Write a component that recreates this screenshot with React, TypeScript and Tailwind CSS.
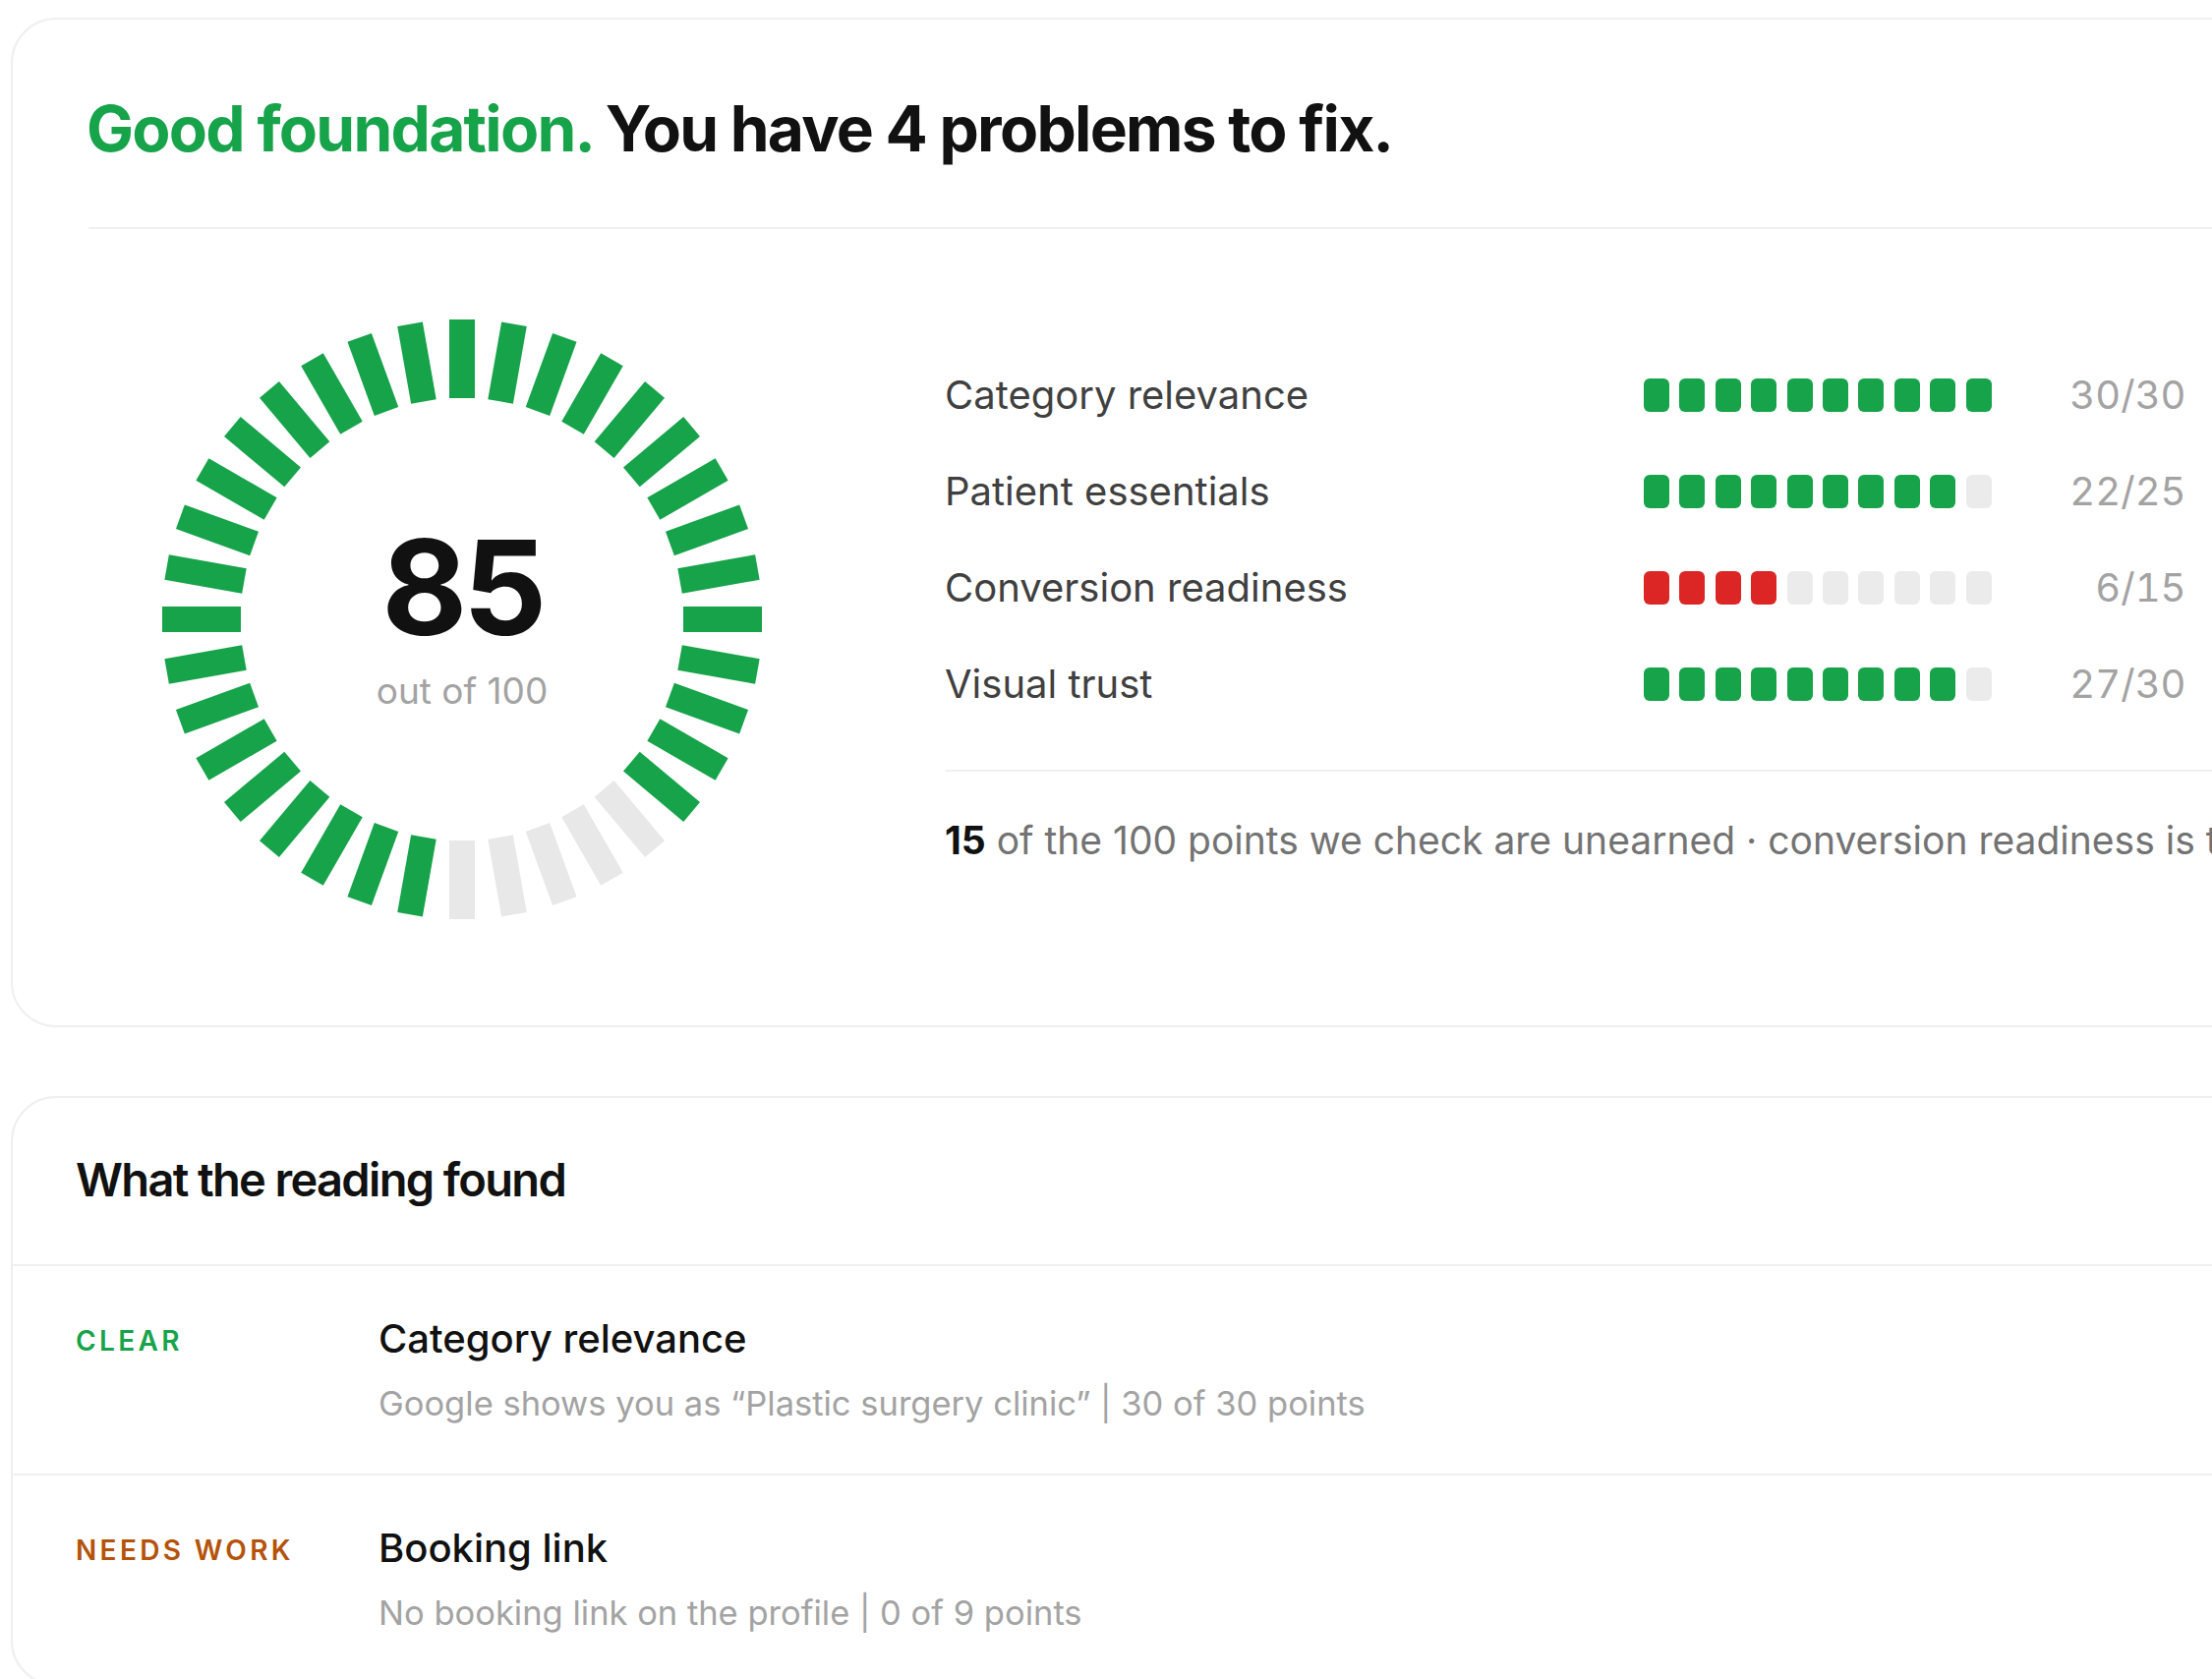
import React from "react";

type Metric = { label: string; filled: number; tone: "green" | "red"; score: string };

const metrics: Metric[] = [
  { label: "Category relevance", filled: 10, tone: "green", score: "30/30" },
  { label: "Patient essentials", filled: 9, tone: "green", score: "22/25" },
  { label: "Conversion readiness", filled: 4, tone: "red", score: "6/15" },
  { label: "Visual trust", filled: 9, tone: "green", score: "27/30" },
];

const findings = [
  {
    status: "CLEAR",
    statusClass: "text-[#16a34a]",
    title: "Category relevance",
    detail: "Google shows you as \u201cPlastic surgery clinic\u201d | 30 of 30 points",
  },
  {
    status: "NEEDS WORK",
    statusClass: "text-[#b45309]",
    title: "Booking link",
    detail: "No booking link on the profile | 0 of 9 points",
  },
];

function ScoreRing() {
  // 36 ticks, 10deg apart; the ones between 140 and 180 deg are unearned
  return (
    <svg width={610} height={610} viewBox="0 0 610 610">
      {Array.from({ length: 36 }).map((_, i) => (
        <rect
          key={i}
          x={292}
          y={0}
          width={26}
          height={80}
          fill={i >= 14 && i <= 18 ? "#e8e8e8" : "#16a34a"}
          transform={`rotate(${i * 10} 305 305)`}
        />
      ))}
    </svg>
  );
}

function Bar({ filled, tone }: { filled: number; tone: "green" | "red" }) {
  return (
    <div className="flex gap-[10.4px]">
      {Array.from({ length: 10 }).map((_, i) => (
        <div
          key={i}
          className={
            "w-[26px] h-[34px] rounded-[6px] " +
            (i < filled ? (tone === "red" ? "bg-[#dc2626]" : "bg-[#16a34a]") : "bg-[#ebebeb]")
          }
        />
      ))}
    </div>
  );
}

export default function App() {
  return (
    <div className="w-full min-h-screen overflow-hidden bg-white font-['Inter',sans-serif] pl-[11px] pt-[18px]">
      {/* score card */}
      <div className="w-[2400px] rounded-[46px] border-2 border-[#efefef] pl-[77px] pr-[77px] pt-[79px] pb-[108px]">
        <h1 className="-ml-[2px] text-[64px] leading-none font-bold tracking-[-0.027em] text-[#111]">
          <span className="text-[#16a34a]">Good foundation.</span> You have 4 problems to fix.
        </h1>
        <div className="mt-[68px] h-[2px] bg-[#f0f0f0]" />

        <div className="flex">
          <div className="relative ml-[75px] mt-[92px] w-[610px] h-[610px] shrink-0">
            <ScoreRing />
            <div className="absolute inset-0 flex flex-col items-center justify-center pb-[9px]">
              <div className="text-[134px] leading-none font-bold tracking-[-0.035em] text-[#111]">85</div>
              <div className="mt-[20px] text-[37px] leading-none text-[#a3a3a3]">out of 100</div>
            </div>
          </div>

          <div className="ml-[186px] flex-1 pt-[120px]">
            {metrics.map((m) => (
              <div key={m.label} className="flex items-center h-[98px]">
                <div className="w-[711px] text-[40px] leading-none text-[#404040]">{m.label}</div>
                <Bar filled={m.filled} tone={m.tone} />
                <div className="w-[198px] text-right text-[40px] leading-none tabular-nums text-[#a3a3a3]">
                  {m.score}
                </div>
              </div>
            ))}
            <div className="mt-[38px] h-[2px] bg-[#f0f0f0]" />
            <p className="mt-[50px] whitespace-nowrap text-[39px] leading-none text-[#737373]">
              <span className="font-bold text-[#111]">15</span> of the 100 points we check are unearned · conversion
              readiness is the biggest gap
            </p>
          </div>
        </div>
      </div>

      {/* findings card */}
      <div className="mt-[70px] w-[2400px] rounded-[46px] border-2 border-[#efefef]">
        <h2 className="px-[64px] pt-[59px] pb-[63px] border-b-2 border-[#f0f0f0] text-[47px] leading-none font-semibold tracking-[-0.035em] text-[#111]">
          What the reading found
        </h2>
        {findings.map((f) => (
          <div key={f.title} className="flex px-[64px] pt-[54px] pb-[53px] border-b-2 border-[#f0f0f0]">
            <div className={"w-[308px] mt-[8px] text-[28px] leading-none font-semibold tracking-[0.12em] " + f.statusClass}>
              {f.status}
            </div>
            <div>
              <div className="text-[40px] leading-none font-medium text-[#111]">{f.title}</div>
              <div className="mt-[29px] text-[34.5px] leading-none text-[#a3a3a3]">{f.detail}</div>
            </div>
          </div>
        ))}
      </div>
    </div>
  );
}
